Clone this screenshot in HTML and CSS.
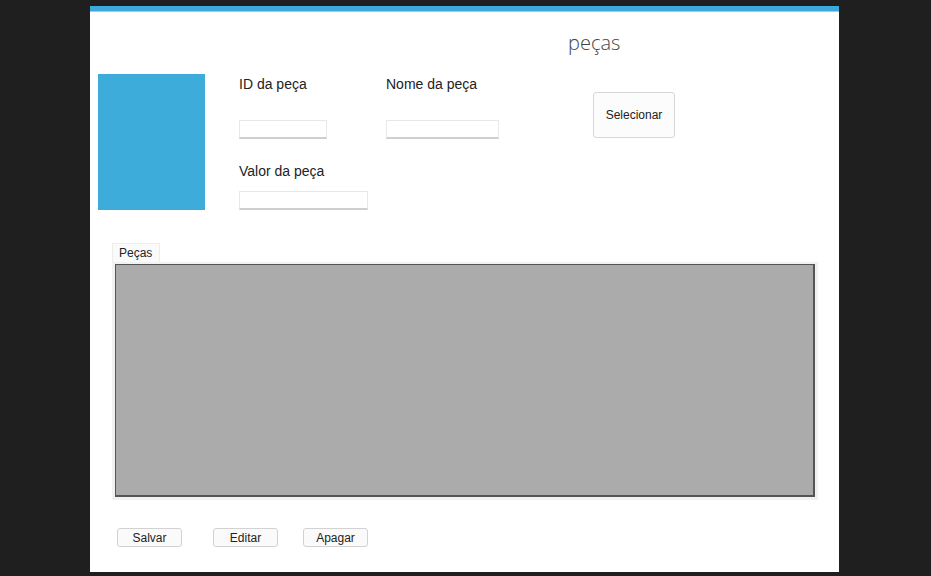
FILE: index.html
```html
<!DOCTYPE html>
<html lang="pt">
<head>
    <meta charset="UTF-8">
    <title>peças</title>
    <link rel="stylesheet" href="styles.css">
</head>
<body>
    <div class="window">
        <div class="title">peças</div>

        <!-- Dados da peça -->
        <div class="top">
            <div class="photo"></div>
            <div class="fields">
                <div class="field">
                    <label>ID da peça</label>
                    <input type="text" class="input-id">
                </div>
                <div class="field">
                    <label>Nome da peça</label>
                    <input type="text" class="input-nome">
                </div>
                <div class="field">
                    <button class="select-btn">Selecionar</button>
                </div>
                <div class="field field-2">
                    <label>Valor da peça</label>
                    <input type="text" class="input-valor">
                </div>
            </div>
        </div>

        <!-- Tabela -->
        <div class="tab-area">
            <div class="tab">Peças</div>
            <div class="frame">
                <div class="grid"></div>
            </div>
        </div>

        <div class="actions">
            <button class="btn">Salvar</button>
            <button class="btn btn-editar">Editar</button>
            <button class="btn btn-apagar">Apagar</button>
        </div>
    </div>
</body>
</html>
```

FILE: styles.css
```css
body {
    margin: 0;
    padding: 6px 0 0 90px;
    background: #1f1f1f;
    font-family: "Liberation Sans", Arial, sans-serif;
    height: 576px;
    box-sizing: border-box;
    overflow: hidden;
}

.window {
    width: 749px;
    height: 566px;
    background: #fff;
    border-top: 5px solid #3caadc;
    box-shadow: inset 0 1px 0 #8fd0ee;
    box-sizing: border-box;
}

.title {
    padding: 20px 0 0 478px;
    height: 63px;
    box-sizing: border-box;
    font-family: "Open Sans", sans-serif;
    font-weight: 300;
    font-size: 20px;
    line-height: 24px;
    color: #444;
}

.top {
    display: flex;
}

.photo {
    width: 107px;
    height: 136px;
    margin-left: 8px;
    background: #3eacda;
}

.fields {
    margin-left: 34px;
    display: grid;
    grid-template-columns: 147px 207px auto;
}

.field label {
    display: block;
    font-size: 14px;
    line-height: 18px;
    color: #222;
    padding-top: 1px;
}

.field input {
    display: block;
    margin-top: 27px;
    height: 19px;
    padding: 0;
    border: 1px solid #e8e8e8;
    border-bottom: 2px solid #cfcfcf;
    box-sizing: border-box;
    background: #fff;
}

.input-id {
    width: 88px;
}

.input-nome {
    width: 113px;
}

.field-2 {
    grid-column: 1 / 3;
    margin-top: 21px;
}

.field-2 input {
    margin-top: 11px;
}

.input-valor {
    width: 129px;
}

.select-btn {
    margin-top: 18px;
    width: 82px;
    height: 46px;
    background: #fcfcfc;
    border: 1px solid #d6d6d6;
    border-radius: 3px;
    font-family: "Liberation Sans", Arial, sans-serif;
    font-size: 12px;
    color: #222;
}

.tab-area {
    margin: 33px 0 0 22px;
}

.tab {
    width: 48px;
    height: 19px;
    box-sizing: border-box;
    border: 1px solid #ececec;
    border-bottom: none;
    background: #fafafa;
    font-size: 12px;
    line-height: 18px;
    padding-left: 6px;
    color: #222;
}

.frame {
    width: 706px;
    height: 238px;
    box-sizing: border-box;
    padding: 2px 3px 3px 3px;
    background: #f2f2f2;
}

.grid {
    height: 100%;
    background: #ababab;
    border: 1px solid #555;
    border-right-width: 2px;
    border-bottom-width: 2px;
    box-sizing: border-box;
}

.actions {
    display: flex;
    margin: 28px 0 0 27px;
}

.btn {
    width: 65px;
    height: 19px;
    padding: 0;
    background: #fafafa;
    border: 1px solid #d2d2d2;
    border-radius: 3px;
    font-family: "Liberation Sans", Arial, sans-serif;
    font-size: 12px;
    color: #222;
}

.btn-editar {
    margin-left: 31px;
}

.btn-apagar {
    margin-left: 25px;
}
```
